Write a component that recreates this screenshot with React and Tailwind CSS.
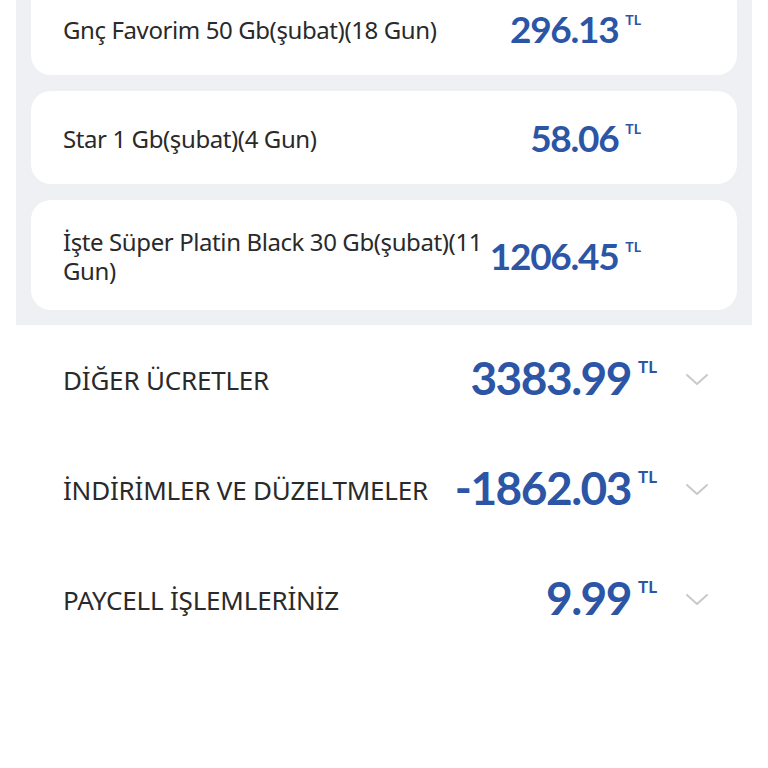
import React from "react";

const cards = [
  { label: "Gnç Favorim 50 Gb(şubat)(18 Gun)", amount: "296.13", first: true },
  { label: "Star 1 Gb(şubat)(4 Gun)", amount: "58.06" },
  { label: "İşte Süper Platin Black 30 Gb(şubat)(11 Gun)", amount: "1206.45" },
];

const rows = [
  { label: "DİĞER ÜCRETLER", amount: "3383.99" },
  { label: "İNDİRİMLER VE DÜZELTMELER", amount: "-1862.03" },
  { label: "PAYCELL İŞLEMLERİNİZ", amount: "9.99" },
];

function Chevron() {
  return (
    <svg width="24" height="14" viewBox="0 0 24 14" fill="none">
      <path d="M2 2 L12 11 L22 2" stroke="#c9c9c9" strokeWidth="2" strokeLinecap="round" strokeLinejoin="round" />
    </svg>
  );
}

export default function App() {
  return (
    <div className="w-[768px] h-[768px] bg-white overflow-hidden" style={{ fontFamily: "Lato, 'Noto Sans', sans-serif" }}>
      <div className="mx-4 bg-[#eef0f3] px-[15px] pb-[15px] flex flex-col gap-4">
        {cards.map((c, i) => (
          <div
            key={i}
            className={`bg-white rounded-[20px] min-h-[93px] py-[25px] pl-8 pr-[96px] flex items-center ${c.first ? "-mt-[18px]" : ""}`}
          >
            <div className="flex-1 min-w-0 text-[24px] leading-[29px] text-[#2a2a2a] tracking-[-0.4px] font-['Noto_Sans',sans-serif] pt-[2px]">{c.label}</div>
            <div className="flex items-start text-[#2c55a6] font-bold">
              <span className="text-[37px] leading-[37px] tracking-[-1.3px]">{c.amount}</span>
              <span className="text-[14px] leading-[14px] ml-[7px] mt-[3px]">TL</span>
            </div>
          </div>
        ))}
      </div>
      <div className="pl-[63px] pr-[59px] flex flex-col">
        {rows.map((r, i) => (
          <div key={i} className="h-[110px] flex items-center">
            <div className="flex-1 text-[26px] text-[#2a2a2a] tracking-[-0.2px] font-['Noto_Sans',sans-serif]">{r.label}</div>
            <div className="flex items-start text-[#2c55a6] font-bold -mt-[4px]">
              <span className="text-[46px] leading-[46px] tracking-[-1.5px]">{r.amount}</span>
              <span className="text-[17px] leading-[17px] ml-[7px] mt-[3px]">TL</span>
            </div>
            <div className="ml-[28px] flex items-center">
              <Chevron />
            </div>
          </div>
        ))}
      </div>
    </div>
  );
}
